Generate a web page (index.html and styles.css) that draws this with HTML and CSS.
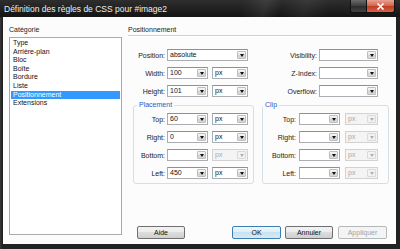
FILE: index.html
```html
<!DOCTYPE html>
<html lang="fr">
<head>
    <meta charset="UTF-8">
    <title>Définition des règles de CSS pour #image2</title>
    <link rel="stylesheet" href="styles.css">
</head>
<body>
    <div class="window">
        <div class="titlebar">
            <span class="title">Définition des règles de CSS pour #image2</span>
            <div class="caption-buttons">
                <span class="btn-help"></span>
                <span class="btn-close">
                    <svg width="9" height="7" viewBox="0 0 9 7"><path d="M1.5 0.5 L7.5 6.5 M7.5 0.5 L1.5 6.5" stroke="#fff" stroke-width="1.6"/></svg>
                </span>
            </div>
        </div>
        <div class="frame">
            <div class="client">
                <div class="categories">
                    <div class="heading">Catégorie</div>
                    <ul class="cat-list">
                        <li>Type</li>
                        <li>Arrière-plan</li>
                        <li>Bloc</li>
                        <li>Boîte</li>
                        <li>Bordure</li>
                        <li>Liste</li>
                        <li class="active">Positionnement</li>
                        <li>Extensions</li>
                    </ul>
                </div>

                <div class="panel">
                    <div class="panel-title">Positionnement</div>

                    <div class="form">
                        <div class="col">
                            <div class="row">
                                <label class="lbl">Position:</label>
                                <div class="combo long"><span class="val">absolute</span><i class="drop"></i></div>
                            </div>
                            <div class="row">
                                <label class="lbl">Width:</label>
                                <div class="combo value"><span class="val">100</span><i class="drop"></i></div>
                                <div class="combo unit"><span class="val">px</span><i class="drop"></i></div>
                            </div>
                            <div class="row">
                                <label class="lbl">Height:</label>
                                <div class="combo value"><span class="val">101</span><i class="drop"></i></div>
                                <div class="combo unit"><span class="val">px</span><i class="drop"></i></div>
                            </div>

                            <fieldset class="group placement">
                                <legend>Placement</legend>
                                <div class="row">
                                    <label class="lbl">Top:</label>
                                    <div class="combo value"><span class="val">60</span><i class="drop"></i></div>
                                    <div class="combo unit"><span class="val">px</span><i class="drop"></i></div>
                                </div>
                                <div class="row">
                                    <label class="lbl">Right:</label>
                                    <div class="combo value"><span class="val">0</span><i class="drop"></i></div>
                                    <div class="combo unit"><span class="val">px</span><i class="drop"></i></div>
                                </div>
                                <div class="row">
                                    <label class="lbl">Bottom:</label>
                                    <div class="combo value"><span class="val"></span><i class="drop"></i></div>
                                    <div class="combo unit disabled"><span class="val">px</span><i class="drop"></i></div>
                                </div>
                                <div class="row">
                                    <label class="lbl">Left:</label>
                                    <div class="combo value"><span class="val">450</span><i class="drop"></i></div>
                                    <div class="combo unit"><span class="val">px</span><i class="drop"></i></div>
                                </div>
                            </fieldset>
                        </div>

                        <div class="col right">
                            <div class="row">
                                <label class="lbl">Visibility:</label>
                                <div class="combo mid"><span class="val"></span><i class="drop"></i></div>
                            </div>
                            <div class="row">
                                <label class="lbl">Z-Index:</label>
                                <div class="combo mid"><span class="val"></span><i class="drop"></i></div>
                            </div>
                            <div class="row">
                                <label class="lbl">Overflow:</label>
                                <div class="combo mid"><span class="val"></span><i class="drop"></i></div>
                            </div>

                            <fieldset class="group clip">
                                <legend>Clip</legend>
                                <div class="row">
                                    <label class="lbl">Top:</label>
                                    <div class="combo value"><span class="val"></span><i class="drop"></i></div>
                                    <div class="combo unit disabled"><span class="val">px</span><i class="drop"></i></div>
                                </div>
                                <div class="row">
                                    <label class="lbl">Right:</label>
                                    <div class="combo value"><span class="val"></span><i class="drop"></i></div>
                                    <div class="combo unit disabled"><span class="val">px</span><i class="drop"></i></div>
                                </div>
                                <div class="row">
                                    <label class="lbl">Bottom:</label>
                                    <div class="combo value"><span class="val"></span><i class="drop"></i></div>
                                    <div class="combo unit disabled"><span class="val">px</span><i class="drop"></i></div>
                                </div>
                                <div class="row">
                                    <label class="lbl">Left:</label>
                                    <div class="combo value"><span class="val"></span><i class="drop"></i></div>
                                    <div class="combo unit disabled"><span class="val">px</span><i class="drop"></i></div>
                                </div>
                            </fieldset>
                        </div>
                    </div>

                    <div class="buttons">
                        <button class="btn help">Aide</button>
                        <button class="btn ok">OK</button>
                        <button class="btn cancel">Annuler</button>
                        <button class="btn apply" disabled>Appliquer</button>
                    </div>
                </div>
            </div>
        </div>
    </div>
</body>
</html>
```

FILE: styles.css
```css
body {
    margin: 0;
    font-family: "Liberation Sans", Arial, sans-serif;
    font-size: 7px;
    color: #111;
}

.window {
    width: 400px;
    height: 249px;
    display: flex;
    flex-direction: column;
    background: #222;
}

/* title bar */
.titlebar {
    height: 17px;
    display: flex;
    align-items: flex-start;
    background:
        linear-gradient(105deg, transparent 60%, rgba(255, 255, 255, 0.08) 66%, transparent 70%, rgba(255, 255, 255, 0.06) 76%, transparent 82%),
        linear-gradient(#2e2e2e, #141414);
}

.title {
    margin: 4px 0 0 4px;
    font-size: 8.5px;
    line-height: 11px;
    color: #eee;
}

.caption-buttons {
    display: flex;
    margin-left: auto;
    margin-right: 5px;
    height: 12px;
    border: 1px solid #111;
    border-top: none;
    border-radius: 0 0 3px 3px;
    overflow: hidden;
}

.btn-help {
    width: 15px;
    background: linear-gradient(#6a6a6a, #3c3c3c 50%, #2a2a2a 50%, #444);
    border-right: 1px solid #111;
}

.btn-close {
    width: 27px;
    display: flex;
    align-items: center;
    justify-content: center;
    background: linear-gradient(#e8a292, #d0624a 50%, #c0391f 50%, #d3664a);
}

/* frame and client area */
.frame {
    flex: 1;
    display: flex;
    padding: 0 4px 5px 3px;
    background: linear-gradient(90deg, #3a3a3a, #222 2px);
}

.client {
    flex: 1;
    display: flex;
    gap: 6px;
    padding: 8px 4px 5px 6px;
    background: #fcfcfc;
}

.categories {
    width: 113px;
    display: flex;
    flex-direction: column;
    margin-bottom: 4px;
}

.heading {
    line-height: 10px;
    margin-bottom: 2px;
    color: #222;
}

.cat-list {
    flex: 1;
    list-style: none;
    margin: 0;
    padding: 1px 1px 0 1px;
    border: 1px solid #aaa;
    background: #fff;
}

.cat-list li {
    line-height: 8.6px;
    padding-left: 2px;
}

.cat-list li.active {
    background: #3399ff;
    color: #fff;
}

/* right panel */
.panel {
    flex: 1;
    display: flex;
    flex-direction: column;
}

.panel-title {
    line-height: 10px;
    border-bottom: 1px solid #d0d0d0;
    box-shadow: 0 1px 0 #fff;
    color: #222;
}

.form {
    display: grid;
    grid-template-columns: 126px 127px;
    column-gap: 8px;
    margin-top: 13px;
}

.col {
    display: flex;
    flex-direction: column;
}

.row {
    display: flex;
    align-items: center;
    height: 12px;
}

.row + .row {
    margin-top: 6px;
}

.lbl {
    width: 37px;
    margin-right: 2px;
    text-align: right;
    color: #222;
}

.right .lbl {
    width: 55px;
}

/* combo boxes */
.combo {
    box-sizing: border-box;
    height: 12px;
    display: flex;
    align-items: center;
    border: 1px solid #abadb3;
    border-top-color: #8e9096;
    background: #fff;
}

.combo .val {
    flex: 1;
    padding-left: 2px;
    line-height: 10px;
}

.combo .drop {
    box-sizing: border-box;
    width: 9px;
    height: 8px;
    margin-right: 1px;
    display: flex;
    align-items: center;
    justify-content: center;
    border: 1px solid #bdbdbd;
    border-radius: 1px;
    background: linear-gradient(#f7f7f7, #e2e2e2 50%, #d0d0d0 50%, #dcdcdc);
}

.combo .drop::after {
    content: "";
    border-left: 2.5px solid transparent;
    border-right: 2.5px solid transparent;
    border-top: 3px solid #111;
}

.combo.long { width: 81px; }
.combo.value { width: 41px; }
.combo.unit { width: 36px; margin-left: 4px; }
.combo.mid { width: 59px; }

.combo.disabled {
    background: #f4f4f4;
    border-color: #d2d2d2;
    color: #aaa;
}

.combo.disabled .drop {
    background: #f2f2f2;
    border-color: #dadada;
}

.combo.disabled .drop::after {
    border-top-color: #b0b0b0;
}

/* group boxes */
.group {
    margin: 4px 0 0 0;
    padding: 4px 5px 4px 0;
    border: 1px solid #d5dfe5;
    border-radius: 3px;
}

.group legend {
    margin-left: 3px;
    padding: 0 2px;
    line-height: 8px;
    color: #1c5cc4;
}

.placement {
    margin-left: 5px;
}

.placement .lbl {
    width: 31px;
}

.clip .lbl {
    width: 33px;
    margin-right: 3px;
}

.clip .combo.unit {
    width: 33px;
    margin-left: 5px;
}

.clip legend {
    margin-left: 0;
}

/* dialog buttons */
.buttons {
    display: flex;
    margin-top: auto;
    height: 13px;
}

.btn {
    box-sizing: border-box;
    width: 49px;
    height: 13px;
    padding: 0;
    border: 1px solid #707070;
    border-radius: 2px;
    background: linear-gradient(#f2f2f2, #ebebeb 50%, #dddddd 50%, #cfcfcf);
    font-family: inherit;
    font-size: 7px;
    color: #111;
}

.btn.help {
    width: 48px;
    margin-left: 9px;
}

.btn.ok {
    margin-left: auto;
    border-color: #3c7fb1;
    background: linear-gradient(#f0f8fc, #dcedf7 50%, #c8e2f2 50%, #d6eaf6);
}

.btn.cancel {
    width: 48px;
    margin-left: 4px;
}

.btn.apply {
    margin-left: 5px;
    margin-right: 5px;
    border-color: #b5b8bb;
    background: #f4f4f4;
    color: #a3a3a3;
}
```
